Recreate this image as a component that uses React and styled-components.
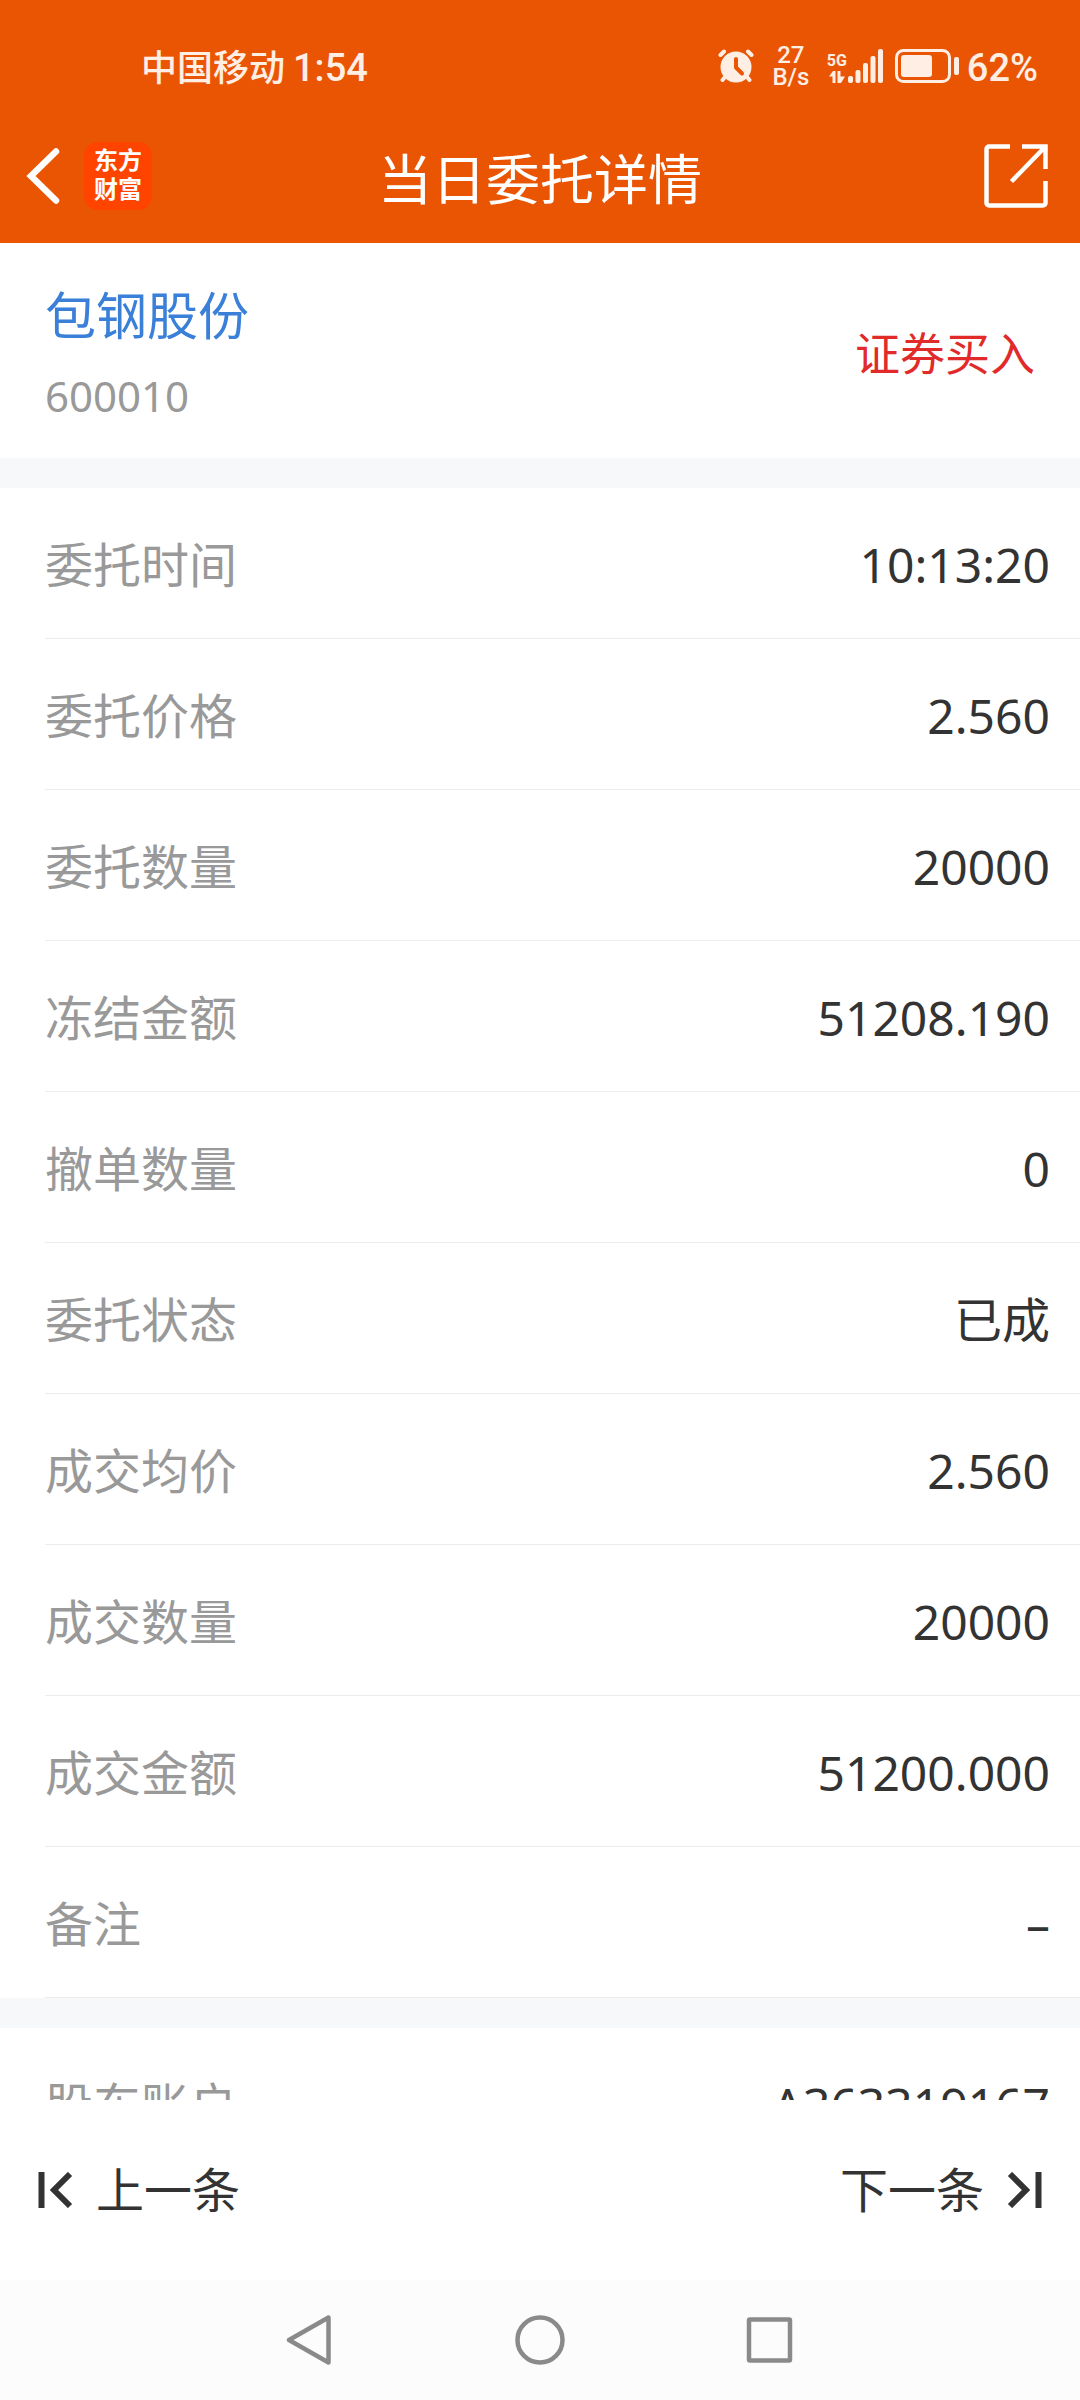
import React from "react";
import styled, { createGlobalStyle } from "styled-components";

const Global = createGlobalStyle`
  *, *::before, *::after { box-sizing: border-box; }
  html, body, #root { height: 100%; }
  body {
    margin: 0;
    background: #fff;
    color: #333;
    font-family: Roboto, "Noto Sans CJK SC", sans-serif;
    font-size: 48px;
    line-height: 64px;
    font-weight: 400;
  }
  button { font: inherit; color: inherit; background: none; border: 0; padding: 0; cursor: pointer; }
  svg { display: block; flex: none; }
`;

const Screen = styled.div`
  display: flex;
  flex-direction: column;
  height: 100vh;
`;

const Header = styled.header`
  flex: none;
  background: #ea5504;
  color: #fff;
`;

const StatusBar = styled.div`
  display: flex;
  align-items: center;
  justify-content: space-between;
  height: 108px;
  padding: 24px 42px 0 141px;
  color: #ffeee4;
  font-size: 38px;
  line-height: 48px;
  font-weight: 500;
`;

const Carrier = styled.div`
  display: flex;
  align-items: baseline;
  gap: 8px;
  padding-top: 4px;
`;

const CarrierName = styled.span`
  font-size: 36px;
`;

const StatusIcons = styled.div`
  display: flex;
  align-items: center;
`;

const NetSpeed = styled.div`
  width: 44px;
  margin: 0 15px;
  font-size: 24px;
  line-height: 22px;
  text-align: center;
`;

const Signal = styled.div`
  display: flex;
  align-items: flex-end;
  gap: 2px;
  margin-right: 12px;
`;

const Network = styled.div`
  display: flex;
  flex-direction: column;
  align-items: center;
  width: 18px;
  font-size: 16px;
  line-height: 20px;
  font-weight: 700;
`;

const Battery = styled.span`
  display: flex;
  align-items: center;
  gap: 8px;
`;

const BatteryLevel = styled.span`
  padding-top: 4px;
`;

const TitleBar = styled.div`
  display: grid;
  grid-template-columns: 1fr auto 1fr;
  align-items: center;
  height: 135px;
  padding: 0 26px;
`;

const BarStart = styled.div`
  display: flex;
  align-items: center;
  gap: 24px;
`;

const AppLogo = styled.span`
  display: grid;
  place-content: center;
  width: 68px;
  height: 68px;
  border-radius: 14px;
  background: #ff4400;
  font-size: 24px;
  line-height: 29px;
  font-weight: 700;
`;

const Title = styled.h1`
  margin: 0;
  padding-top: 12px;
  font-size: 54px;
  line-height: 72px;
  font-weight: 400;
`;

const ShareButton = styled.button`
  justify-self: end;
  padding-right: 6px;
`;

const Content = styled.main`
  flex: 1;
  min-height: 0;
  overflow: hidden;
`;

const Summary = styled.section`
  display: flex;
  align-items: center;
  justify-content: space-between;
  padding: 35px 45px 24px;
`;

const StockName = styled.h2`
  margin: 0;
  color: #3a80d9;
  font-size: 51px;
  line-height: 80px;
  font-weight: 400;
`;

const StockCode = styled.div`
  color: #999;
  font-family: "Noto Sans", sans-serif;
  font-size: 42px;
  line-height: 76px;
`;

const Direction = styled.strong`
  color: #e12a2a;
  font-size: 45px;
  font-weight: 400;
`;

const Group = styled.dl`
  margin: 0;
  border-top: 30px solid #f7f8fa;
`;

const Row = styled.div`
  display: flex;
  align-items: center;
  justify-content: space-between;
  height: 151px;
  margin-left: 45px;
  padding: 4px 30px 0 0;
  border-bottom: 1px solid #ededed;
  font-family: "Noto Sans", "Noto Sans CJK SC", sans-serif;
`;

const Label = styled.dt`
  color: #999;
`;

const Value = styled.dd`
  margin: 0;
`;

const Pager = styled.nav`
  flex: none;
  display: flex;
  align-items: center;
  justify-content: space-between;
  height: 180px;
  padding: 0 38px;
  font-family: "Noto Sans", "Noto Sans CJK SC", sans-serif;
`;

const PagerButton = styled.button`
  display: flex;
  align-items: center;
  gap: 22px;
`;

const SystemNav = styled.nav`
  flex: none;
  display: flex;
  justify-content: center;
  height: 120px;
  background: #fcfcfc;
`;

const SystemButton = styled.button`
  display: grid;
  place-items: center;
  width: 230px;
`;

const AlarmIcon = () => (
  <svg width="36" height="34" viewBox="0 0 36 34" aria-hidden="true">
    <g stroke="currentColor" strokeWidth="4" strokeLinecap="round">
      <path d="M2.5 6 6 2.5M33.5 6 30 2.5M7 28l-2.500 3M29 28l2.500 3" />
    </g>
    <circle cx="18" cy="18" r="15.500" fill="currentColor" />
    <path d="M18 10v8.500l6 6" fill="none" stroke="#ea5504" strokeWidth="4" strokeLinecap="round" strokeLinejoin="round" />
  </svg>
);

const TrafficIcon = () => (
  <svg width="16" height="12" viewBox="0 0 16 12" fill="currentColor" aria-hidden="true">
    <path d="M0 5.500 4 0h2.500v12h-3V5.500zM8.500 0h3v5.500H16L12 12H8.500z" />
  </svg>
);

const BarsIcon = () => (
  <svg width="35" height="34" viewBox="0 0 35 34" fill="currentColor" aria-hidden="true">
    <rect x="0" y="27" width="5" height="7" rx="2" />
    <rect x="7.500" y="21" width="5" height="13" rx="2" />
    <rect x="15" y="14" width="5" height="20" rx="2" />
    <rect x="22.500" y="7" width="5" height="27" rx="2" />
    <rect x="30" y="0" width="5" height="34" rx="2" />
  </svg>
);

const BatteryIcon = () => (
  <svg width="64" height="34" viewBox="0 0 64 34" aria-hidden="true">
    <rect x="1.500" y="1.500" width="53" height="31" rx="7" fill="none" stroke="currentColor" strokeWidth="3" />
    <rect x="6" y="6" width="31" height="22" rx="3" fill="currentColor" />
    <rect x="59" y="8" width="5" height="18" rx="2" fill="currentColor" />
  </svg>
);

const BackIcon = () => (
  <svg width="34" height="56" viewBox="0 0 34 56" fill="none" stroke="currentColor" strokeWidth="6.500" strokeLinecap="round" aria-hidden="true">
    <path d="M30 3.500 5 28 30 52.500" />
  </svg>
);

const ShareIcon = () => (
  <svg width="64" height="64" viewBox="0 0 64 64" fill="none" stroke="currentColor" strokeWidth="4.500" aria-hidden="true">
    <path d="M26 2.500H5a2.500 2.500 0 0 0-2.500 2.500v54A2.500 2.500 0 0 0 5 61.500h54a2.500 2.500 0 0 0 2.500-2.500V37" />
    <path d="M38 2.500h23.500V25M61 3 27.500 37.500" />
  </svg>
);

const PreviousIcon = () => (
  <svg width="36" height="36" viewBox="0 0 36 36" fill="none" stroke="currentColor" strokeWidth="6" aria-hidden="true">
    <path d="M3.500 0v36M32 2 16 18l16 16" />
  </svg>
);

const NextIcon = () => (
  <svg width="36" height="36" viewBox="0 0 36 36" fill="none" stroke="currentColor" strokeWidth="6" aria-hidden="true">
    <path d="M32.500 0v36M4 2l16 16L4 34" />
  </svg>
);

const NavIcon = ({ children }) => (
  <svg width="50" height="50" viewBox="0 0 50 50" fill="none" stroke="#8a8a8a" strokeWidth="4.500" strokeLinejoin="round" aria-hidden="true">
    {children}
  </svg>
);

const orderRows = [
  ["委托时间", "10:13:20"],
  ["委托价格", "2.560"],
  ["委托数量", "20000"],
  ["冻结金额", "51208.190"],
  ["撤单数量", "0"],
  ["委托状态", "已成"],
  ["成交均价", "2.560"],
  ["成交数量", "20000"],
  ["成交金额", "51200.000"],
  ["备注", "–"],
];

const accountRows = [["股东账户", "A363319167"]];

const DetailGroup = ({ rows }) => (
  <Group>
    {rows.map(([label, value]) => (
      <Row key={label}>
        <Label>{label}</Label>
        <Value>{value}</Value>
      </Row>
    ))}
  </Group>
);

export default function App() {
  return (
    <>
      <Global />
      <Screen>
        <Header>
          <StatusBar>
            <Carrier>
              <CarrierName>中国移动</CarrierName>
              <span>1:54</span>
            </Carrier>
            <StatusIcons>
              <AlarmIcon />
              <NetSpeed>
                <div>27</div>
                <div>B/s</div>
              </NetSpeed>
              <Signal>
                <Network>
                  <span>5G</span>
                  <TrafficIcon />
                </Network>
                <BarsIcon />
              </Signal>
              <Battery>
                <BatteryIcon />
                <BatteryLevel>62%</BatteryLevel>
              </Battery>
            </StatusIcons>
          </StatusBar>
          <TitleBar>
            <BarStart>
              <button type="button" aria-label="返回">
                <BackIcon />
              </button>
              <AppLogo>
                <span>东方</span>
                <span>财富</span>
              </AppLogo>
            </BarStart>
            <Title>当日委托详情</Title>
            <ShareButton type="button" aria-label="分享">
              <ShareIcon />
            </ShareButton>
          </TitleBar>
        </Header>
        <Content>
          <Summary>
            <div>
              <StockName>包钢股份</StockName>
              <StockCode>600010</StockCode>
            </div>
            <Direction>证券买入</Direction>
          </Summary>
          <DetailGroup rows={orderRows} />
          <DetailGroup rows={accountRows} />
        </Content>
        <Pager>
          <PagerButton type="button">
            <PreviousIcon />
            <span>上一条</span>
          </PagerButton>
          <PagerButton type="button">
            <span>下一条</span>
            <NextIcon />
          </PagerButton>
        </Pager>
        <SystemNav>
          <SystemButton type="button" aria-label="系统返回">
            <NavIcon>
              <path d="M43.500 2.500v45L4 25z" />
            </NavIcon>
          </SystemButton>
          <SystemButton type="button" aria-label="主屏幕">
            <NavIcon>
              <circle cx="25" cy="25" r="22.500" />
            </NavIcon>
          </SystemButton>
          <SystemButton type="button" aria-label="最近任务">
            <NavIcon>
              <rect x="4" y="4.500" width="41" height="41" rx="1" />
            </NavIcon>
          </SystemButton>
        </SystemNav>
      </Screen>
    </>
  );
}
